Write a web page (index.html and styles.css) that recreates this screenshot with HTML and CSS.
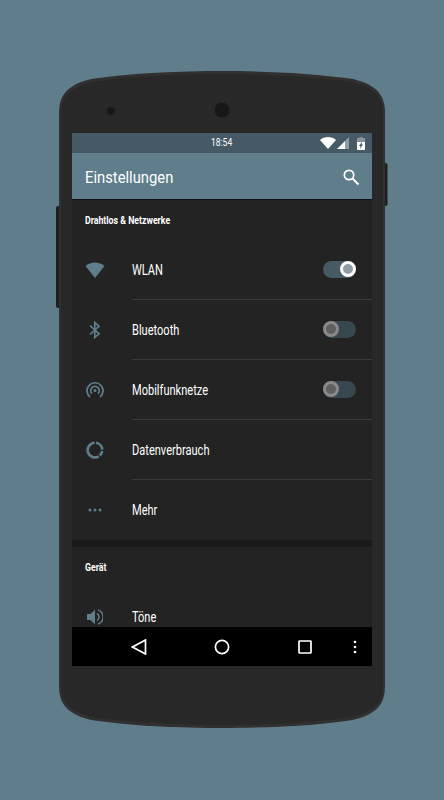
FILE: index.html
```html
<!DOCTYPE html>
<html lang="de">
<head>
  <meta charset="UTF-8" />
  <title>Einstellungen</title>
  <link rel="stylesheet" href="styles.css">
</head>
<body>
  <div class="phone">
    <svg class="phone-body" width="342" height="657" viewBox="0 0 342 657">
      <rect class="btn" x="5" y="135" width="10" height="102" rx="2" />
      <rect class="btn" x="327" y="92" width="9.500" height="43" rx="2" />
      <path class="edge" d="M8 42C8 24 16 14 40 8C80 2 130 0 171 0C212 0 262 2 302 8C326 14 334 24 334 42V615C334 633 326 643 302 649C262 655 212 657 171 657C130 657 80 655 40 649C16 643 8 633 8 615Z" />
      <path class="shell" d="M10 43C10 26 18 17 41 11C81 5 130 3 171 3C212 3 261 5 301 11C324 17 332 26 332 43V614C332 631 324 640 301 646C261 652 212 654 171 654C130 654 81 652 41 646C18 640 10 631 10 614Z" />
      <circle class="hole" cx="60" cy="40" r="4" />
      <circle class="hole" cx="171" cy="39" r="7.500" />
    </svg>

    <div class="screen">
      <div class="status-bar">
        <span class="clock">18:54</span>
        <div class="status-icons">
          <svg width="16" height="12" viewBox="0 0 16 12"><path fill="#fff" d="M8 12 0 3C2 1.200 5 0 8 0s6 1.200 8 3z"/></svg>
          <svg class="signal" width="12" height="12" viewBox="0 0 12 12"><path fill="#fff" opacity=".4" d="M12 0v12H8V4z"/><path fill="#fff" d="M0 12 8 4v8z"/></svg>
          <svg class="battery" width="8" height="13" viewBox="0 0 8 13"><path fill="#fff" opacity=".35" d="M2.500 0h3v1H8v4H0V1h2.500z"/><path fill="#fff" d="M0 5h8v8H0z"/><path fill="#455a64" d="M5 4.500 2 9h1.500L3 12l3-4.500H4.500z"/></svg>
        </div>
      </div>

      <div class="app-bar">
        <span class="app-title">Einstellungen</span>
        <svg width="18" height="18" viewBox="0 0 18 18"><circle cx="7" cy="7" r="4.700" fill="none" stroke="#fff" stroke-width="1.700"/><path d="m10.500 10.500 6 6" stroke="#fff" stroke-width="2"/></svg>
      </div>

      <div class="settings-list">
        <div class="section-title"><span>Drahtlos &amp; Netzwerke</span></div>

        <div class="row">
          <div class="row-icon">
            <svg width="20" height="16" viewBox="0 0 20 16"><path class="ico" d="M10 16 .5 4C3 1.700 6.300.5 10 .5s7 1.200 9.500 3.500z"/></svg>
          </div>
          <div class="row-body">
            <span class="row-label">WLAN</span>
            <div class="switch on"><span class="knob"></span></div>
          </div>
        </div>

        <div class="row">
          <div class="row-icon">
            <svg width="12" height="18" viewBox="0 0 12 18"><path fill="none" stroke="#607d8b" stroke-width="1.700" d="M1 4.500 10 12.800 5.800 16.500V1.500L10 5.200 1 13.500"/></svg>
          </div>
          <div class="row-body">
            <span class="row-label">Bluetooth</span>
            <div class="switch"><span class="knob"></span></div>
          </div>
        </div>

        <div class="row">
          <div class="row-icon">
            <svg width="18" height="18" viewBox="0 0 18 18"><g fill="none" stroke="#607d8b" stroke-width="1.700"><path d="M4 16A8 8 0 1 1 14 16"/><path d="M6 12.700A4.300 4.300 0 1 1 12 12.700"/></g><circle class="ico" cx="9" cy="9.500" r="1.500"/></svg>
          </div>
          <div class="row-body">
            <span class="row-label">Mobilfunknetze</span>
            <div class="switch"><span class="knob"></span></div>
          </div>
        </div>

        <div class="row">
          <div class="row-icon">
            <svg width="18" height="18" viewBox="0 0 18 18"><g fill="none" stroke="#607d8b" stroke-width="2.600"><path d="M10 1.800A7.300 7.300 0 0 1 16.300 8.600"/><path d="M16.200 10A7.300 7.300 0 0 1 13.800 14.500"/><path d="M12.800 15.300A7.300 7.300 0 1 1 8.600 1.800"/></g></svg>
          </div>
          <div class="row-body">
            <span class="row-label">Datenverbrauch</span>
          </div>
        </div>

        <div class="row last">
          <div class="row-icon">
            <svg width="14" height="4" viewBox="0 0 14 4"><circle class="ico" cx="2" cy="2" r="1.500"/><circle class="ico" cx="7" cy="2" r="1.500"/><circle class="ico" cx="12" cy="2" r="1.500"/></svg>
          </div>
          <div class="row-body">
            <span class="row-label">Mehr</span>
          </div>
        </div>

        <div class="section-gap"></div>
        <div class="section-title"><span>Gerät</span></div>

        <div class="row last">
          <div class="row-icon">
            <svg width="16" height="16" viewBox="0 0 16 16"><path class="ico" d="M0 5h3.500L8 .8v14.400L3.500 11H0z"/><path fill="none" stroke="#607d8b" stroke-width="1.500" d="M10 4.500a4 4 0 0 1 0 7M11 .9a7.500 7.500 0 0 1 0 14.200"/></svg>
          </div>
          <div class="row-body">
            <span class="row-label">Töne</span>
          </div>
        </div>
      </div>

      <div class="nav-bar">
        <svg class="nav-back" width="16" height="16" viewBox="0 0 16 16"><path fill="none" stroke="#fff" stroke-width="1.700" d="M14.500 1 1.500 8l13 7z"/></svg>
        <svg class="nav-home" width="16" height="16" viewBox="0 0 16 16"><circle cx="8" cy="8" r="6.600" fill="none" stroke="#fff" stroke-width="1.700"/></svg>
        <svg class="nav-recent" width="14" height="14" viewBox="0 0 14 14"><rect x="1" y="1" width="12" height="12" rx=".6" fill="none" stroke="#fff" stroke-width="1.700"/></svg>
        <svg class="nav-menu" width="4" height="14" viewBox="0 0 4 14"><circle cx="2" cy="2" r="1.300" fill="#fff"/><circle cx="2" cy="7" r="1.300" fill="#fff"/><circle cx="2" cy="12" r="1.300" fill="#fff"/></svg>
      </div>
    </div>
  </div>
</body>
</html>
```

FILE: styles.css
```css
body {
  margin: 0;
  height: 800px;
  overflow: hidden;
  background-color: #607d8b;
  font-family: Roboto, sans-serif;
}

.phone {
  position: relative;
  width: 300px;
  height: 533px;
  margin-left: 72px;
  padding-top: 133px;
}

.phone-body {
  position: absolute;
  left: -21px;
  top: 71px;
}

.btn {
  fill: #1f1f1f;
}

.edge {
  fill: #303030;
}

.shell {
  fill: #282828;
}

.hole {
  fill: #171717;
}

.screen {
  position: relative;
  height: 533px;
  display: flex;
  flex-direction: column;
  background-color: #232323;
  overflow: hidden;
}

.status-bar {
  position: relative;
  flex: 0 0 20px;
  display: flex;
  justify-content: flex-end;
  align-items: center;
  padding-right: 7px;
  background-color: #455a64;
}

.clock {
  position: absolute;
  left: 139px;
  top: 3px;
  font-size: 10px;
  line-height: 14px;
  color: #fff;
  transform: scaleX(.85);
  transform-origin: left center;
}

.status-icons {
  display: flex;
  align-items: center;
  gap: 1px;
}

.battery {
  margin-left: 7px;
}

.app-bar {
  flex: 0 0 47px;
  display: flex;
  justify-content: space-between;
  align-items: center;
  padding: 1px 12px 0 13px;
  background-color: #607d8b;
  border-bottom: 1px solid #111;
  box-sizing: border-box;
}

.app-title {
  font-size: 17px;
  color: #fff;
  transform: scaleX(.87);
  transform-origin: left center;
}

.settings-list {
  flex: 1;
  overflow: hidden;
}

.section-title {
  height: 40px;
  line-height: 41px;
  padding-left: 13px;
  font-size: 10px;
  font-weight: 700;
  color: #fff;
}

.section-title span {
  display: inline-block;
  transform: scaleX(.875);
  transform-origin: left center;
}

.section-gap {
  height: 7px;
  background-color: #1a1a1a;
}

.row {
  display: flex;
  height: 60px;
}

.row-icon {
  flex: 0 0 60px;
  display: flex;
  justify-content: center;
  align-items: center;
  padding-right: 14px;
  box-sizing: border-box;
}

.ico {
  fill: #607d8b;
}

.row-body {
  flex: 1;
  display: flex;
  justify-content: space-between;
  align-items: center;
  padding-right: 16px;
  border-bottom: 1px solid #3a3a3a;
}

.row.last .row-body {
  border-bottom: none;
}

.row-label {
  font-size: 14px;
  color: #fff;
  transform: scaleX(.79);
  transform-origin: left center;
}

.switch {
  position: relative;
  width: 33px;
  height: 17px;
  border-radius: 9px;
  background-color: #37474f;
}

.switch.on {
  background-color: #455a64;
}

.knob {
  position: absolute;
  left: 0;
  top: 0;
  width: 10px;
  height: 10px;
  border: 3px solid #8a8a8a;
  border-radius: 50%;
  background-color: #5f5f5f;
  box-sizing: content-box;
}

.switch.on .knob {
  left: auto;
  right: 0;
  border-color: #fff;
  background-color: #8f9ea5;
}

.nav-bar {
  position: relative;
  flex: 0 0 39px;
  background-color: #000;
}

.nav-bar svg {
  position: absolute;
  top: 12px;
}

.nav-back {
  left: 59px;
}

.nav-home {
  left: 142px;
}

.nav-bar .nav-recent {
  left: 226px;
  top: 13px;
}

.nav-bar .nav-menu {
  left: 281px;
  top: 13px;
}
```
